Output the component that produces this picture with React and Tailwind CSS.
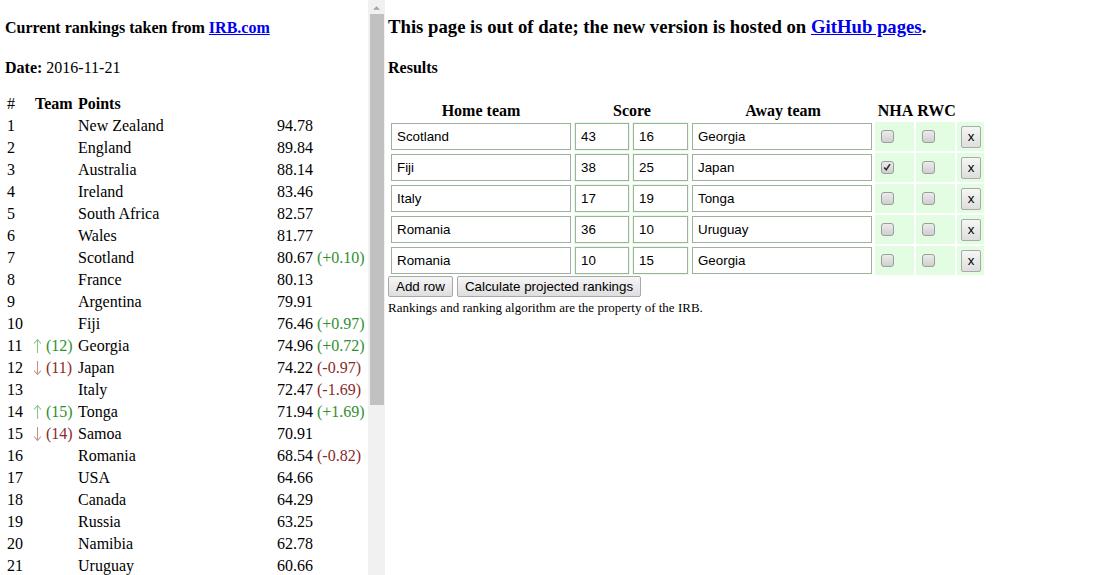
import React from "react";

const RANKINGS = [
  { pos: 1, team: "New Zealand", pts: "94.78" },
  { pos: 2, team: "England", pts: "89.84" },
  { pos: 3, team: "Australia", pts: "88.14" },
  { pos: 4, team: "Ireland", pts: "83.46" },
  { pos: 5, team: "South Africa", pts: "82.57" },
  { pos: 6, team: "Wales", pts: "81.77" },
  { pos: 7, team: "Scotland", pts: "80.67", diff: "+0.10" },
  { pos: 8, team: "France", pts: "80.13" },
  { pos: 9, team: "Argentina", pts: "79.91" },
  { pos: 10, team: "Fiji", pts: "76.46", diff: "+0.97" },
  { pos: 11, team: "Georgia", pts: "74.96", diff: "+0.72", move: "up", prev: 12 },
  { pos: 12, team: "Japan", pts: "74.22", diff: "-0.97", move: "down", prev: 11 },
  { pos: 13, team: "Italy", pts: "72.47", diff: "-1.69" },
  { pos: 14, team: "Tonga", pts: "71.94", diff: "+1.69", move: "up", prev: 15 },
  { pos: 15, team: "Samoa", pts: "70.91", move: "down", prev: 14 },
  { pos: 16, team: "Romania", pts: "68.54", diff: "-0.82" },
  { pos: 17, team: "USA", pts: "64.66" },
  { pos: 18, team: "Canada", pts: "64.29" },
  { pos: 19, team: "Russia", pts: "63.25" },
  { pos: 20, team: "Namibia", pts: "62.78" },
  { pos: 21, team: "Uruguay", pts: "60.66" },
];

const FIXTURES = [
  { home: "Scotland", hs: "43", as: "16", away: "Georgia", nha: false },
  { home: "Fiji", hs: "38", as: "25", away: "Japan", nha: true },
  { home: "Italy", hs: "17", as: "19", away: "Tonga", nha: false },
  { home: "Romania", hs: "36", as: "10", away: "Uruguay", nha: false },
  { home: "Romania", hs: "10", as: "15", away: "Georgia", nha: false },
];

const SERIF = { fontFamily: '"Liberation Serif", "Times New Roman", serif' };
const SANS = { fontFamily: '"Liberation Sans", Arial, sans-serif' };

// thin arrow like the old serif ↑ / ↓ glyph
function Arrow({ up }) {
  return (
    <svg viewBox="0 0 9 16" className="inline-block w-[9px] h-[16px] align-[-3px]">
      {up ? (
        <path d="M4.5 15 V2 M1 5.5 L4.5 1.5 L8 5.5" fill="none" stroke="#8cc48c" strokeWidth="1.1" />
      ) : (
        <path d="M4.5 1 V14 M1 10.5 L4.5 14.5 L8 10.5" fill="none" stroke="#c49090" strokeWidth="1.1" />
      )}
    </svg>
  );
}

function Movement({ move, prev }) {
  if (!move) return null;
  const up = move === "up";
  return (
    <span className={up ? "text-[#2f8f2f]" : "text-[#8b2a2a]"}>
      <Arrow up={up} /> ({prev})
    </span>
  );
}

function Diff({ diff }) {
  if (!diff) return null;
  const plus = diff.startsWith("+");
  return <span className={plus ? "text-[#2f8f2f]" : "text-[#8b2a2a]"}> ({diff})</span>;
}

function Checkbox({ checked }) {
  return (
    <span className="relative block w-[13px] h-[13px] rounded-[3px] border border-[#9c9c9c] bg-gradient-to-b from-[#ececec] to-[#cfcfcf]">
      {checked && (
        <svg viewBox="0 0 13 13" className="absolute left-0 top-0 w-[11px] h-[11px]">
          <path d="M2.5 6.5 L5 9 L9.5 2.5" fill="none" stroke="#333" strokeWidth="2" />
        </svg>
      )}
    </span>
  );
}

function TextBox({ value, w }) {
  return (
    <div
      className={`${w} h-[27px] border border-[#9fb09f] bg-white flex items-center px-[5px] text-[13.33px] leading-none text-black`}
      style={SANS}
    >
      {value}
    </div>
  );
}

function GrayButton({ children, className = "" }) {
  return (
    <button
      className={`border border-[#a9a9a9] rounded-[2px] bg-gradient-to-b from-[#f6f6f6] to-[#dedede] text-black text-[13.33px] leading-none ${className}`}
      style={SANS}
    >
      {children}
    </button>
  );
}

function Rankings() {
  return (
    <div className="w-[368px] shrink-0 pl-[5px] text-[16px] text-black" style={SERIF}>
      <div className="mt-[18px] leading-[20px] font-bold">
        Current rankings taken from <a className="text-[#0000ee] underline">IRB.com</a>
      </div>
      <div className="mt-[20px] leading-[20px]">
        <b>Date:</b> 2016-11-21
      </div>
      <div className="mt-[15px]">
        <div className="grid grid-cols-[28px_45px_199px_auto] leading-[22px] font-bold">
          <div className="pl-[2px] font-normal">#</div>
          <div className="pl-[2px]">Team</div>
          <div>Points</div>
          <div />
        </div>
        {RANKINGS.map((r) => (
          <div key={r.pos} className="grid grid-cols-[28px_45px_199px_auto] leading-[22px] whitespace-nowrap">
            <div className="pl-[2px]">{r.pos}</div>
            <div>
              <Movement move={r.move} prev={r.prev} />
            </div>
            <div>{r.team}</div>
            <div>
              {r.pts}
              <Diff diff={r.diff} />
            </div>
          </div>
        ))}
      </div>
    </div>
  );
}

function Scrollbar() {
  return (
    <div className="w-[17px] shrink-0 h-[575px] bg-[#f1f1f1] flex flex-col items-center">
      <div className="h-[14px] w-full flex items-center justify-center">
        <svg viewBox="0 0 8 4" className="w-[7px] h-[4px] mt-[2px]">
          <path d="M0 4 L4 0 L8 4 Z" fill="#a3a3a3" />
        </svg>
      </div>
      <div className="w-[14px] h-[391px] bg-[#c1c1c1]" />
    </div>
  );
}

function Results() {
  return (
    <div className="ml-[3px] text-black" style={SERIF}>
      <h2 className="mt-[16px] leading-[22px] text-[18.72px] font-bold whitespace-nowrap">
        This page is out of date; the new version is hosted on{" "}
        <a className="text-[#0000ee] underline">GitHub pages</a>.
      </h2>
      <div className="mt-[20px] leading-[20px] text-[16px] font-bold">Results</div>
      <div className="mt-[23px] flex flex-col gap-[2px]">
        <div className="flex gap-[2px] pl-[2px] text-[16px] font-bold leading-[20px] h-[19px] items-center">
          <div className="w-[182px] text-center">Home team</div>
          <div className="w-[116px] text-center">Score</div>
          <div className="w-[182px] text-center">Away team</div>
          <div className="w-[39px] text-center">NHA</div>
          <div className="w-[39px] text-center">RWC</div>
        </div>
        {FIXTURES.map((f, i) => (
          <div key={i} className="flex gap-[2px] pl-[2px] h-[29px]">
            <div className="p-[1px]">
              <TextBox value={f.home} w="w-[180px]" />
            </div>
            <div className="p-[1px] bg-[#e3fde3]">
              <TextBox value={f.hs} w="w-[54px]" />
            </div>
            <div className="p-[1px] bg-[#e3fde3]">
              <TextBox value={f.as} w="w-[55px]" />
            </div>
            <div className="p-[1px]">
              <TextBox value={f.away} w="w-[180px]" />
            </div>
            <div className="w-[39px] bg-[#e3fde3] pl-[6px] pt-[8px]">
              <Checkbox checked={f.nha} />
            </div>
            <div className="w-[39px] bg-[#e3fde3] pl-[6px] pt-[8px]">
              <Checkbox />
            </div>
            <div className="w-[27px] bg-[#e3fde3] pl-[4px] pt-[4px]">
              <GrayButton className="block w-[20px] h-[22px]">x</GrayButton>
            </div>
          </div>
        ))}
      </div>
      <div className="mt-[1px] flex gap-[4px]">
        <GrayButton className="h-[21px] px-[7px]">Add row</GrayButton>
        <GrayButton className="h-[21px] px-[7px]">Calculate projected rankings</GrayButton>
      </div>
      <div className="mt-[3px] text-[13px] leading-[16px]">
        Rankings and ranking algorithm are the property of the IRB.
      </div>
    </div>
  );
}

export default function App() {
  return (
    <div className="w-[1096px] h-[575px] overflow-hidden bg-white flex items-start">
      <Rankings />
      <Scrollbar />
      <Results />
    </div>
  );
}
